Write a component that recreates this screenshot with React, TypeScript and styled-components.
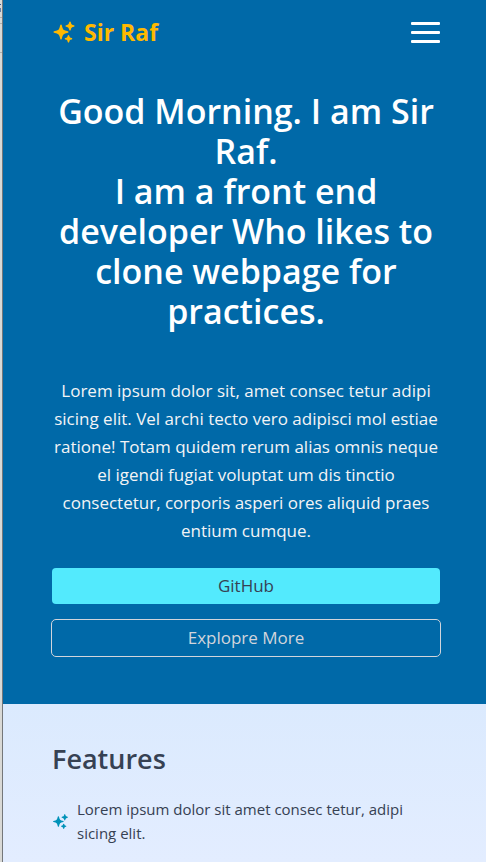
import React from "react";
import styled, { createGlobalStyle } from "styled-components";
import { HiSparkles } from "react-icons/hi2";

const GlobalStyle = createGlobalStyle`
  *, *::before, *::after { box-sizing: border-box; }
  body {
    margin: 0;
    background: #d9d9d6;
    font-family: "Segoe UI", "Open Sans", "Noto Sans", sans-serif;
  }
  h1, h2, p, ul { margin: 0; padding: 0; }
`;

const Frame = styled.div`
  display: grid;
  grid-template-columns: 3px minmax(0, 1fr);
  min-height: 100vh;
`;

const WindowEdge = styled.div`
  border-right: 1px solid #74777a;
  background:
    linear-gradient(#3d5a94, #3d5a94) 0 4px / 1px 1px no-repeat,
    linear-gradient(#6b7ea0, #6b7ea0) 0 8px / 1px 4px no-repeat,
    linear-gradient(#b0b0ae, #b0b0ae) 0 17px / 2px 1px no-repeat,
    linear-gradient(#b0b0ae, #b0b0ae) 0 23px / 2px 1px no-repeat,
    linear-gradient(#b0b0ae, #b0b0ae) 0 52px / 2px 1px no-repeat,
    #d9d9d6;
`;

const Page = styled.div`
  display: flex;
  flex-direction: column;
`;

const Hero = styled.div`
  padding: 0 46px 47px 49px;
  background: #0069a8;
  color: #ffffff;
`;

const TopBar = styled.header`
  display: flex;
  align-items: center;
  justify-content: space-between;
  height: 64px;
`;

const Brand = styled.a`
  display: flex;
  align-items: center;
  gap: 8px;
  color: #ffb900;
  font-size: 23px;
  font-weight: 700;
  line-height: 32px;
  text-decoration: none;
`;

const MenuButton = styled.button`
  display: flex;
  padding: 0;
  border: 0;
  background: none;
  color: inherit;
  cursor: pointer;
`;

const Intro = styled.main`
  display: flex;
  flex-direction: column;
  padding-top: 27px;
  text-align: center;
`;

const Headline = styled.h1`
  font-size: 34px;
  font-weight: 600;
  line-height: 40px;
`;

const Summary = styled.p`
  margin-top: 46px;
  color: #f3f4f6;
  font-size: 17px;
  line-height: 28px;
`;

const Actions = styled.div`
  display: flex;
  flex-direction: column;
  gap: 15px;
  margin-top: 23px;
`;

const ActionButton = styled.button<{ $outlined?: boolean }>`
  height: ${(p) => (p.$outlined ? 38 : 36)}px;
  margin: 0 ${(p) => (p.$outlined ? -1 : 0)}px;
  padding: 0 16px;
  border: ${(p) => (p.$outlined ? "1px solid #d1d5dc" : "0")};
  border-radius: ${(p) => (p.$outlined ? 5 : 4)}px;
  background: ${(p) => (p.$outlined ? "transparent" : "#53eafd")};
  color: ${(p) => (p.$outlined ? "#d1d5dc" : "#364153")};
  font-family: inherit;
  font-size: 17px;
  line-height: 28px;
  cursor: pointer;
`;

const FeatureSection = styled.section`
  flex: 1;
  padding: 37px 46px 16px 49px;
  background: linear-gradient(#dbeafe, #e3edff);
  color: #364153;
`;

const SectionTitle = styled.h2`
  font-size: 27px;
  font-weight: 600;
  line-height: 36px;
`;

const FeatureList = styled.ul`
  margin-top: 20px;
  list-style: none;
`;

const Feature = styled.li`
  display: flex;
  align-items: center;
  gap: 8px;
  font-size: 15px;
  line-height: 24px;

  svg {
    flex: none;
    color: #0092b8;
  }
`;

export default function App() {
  return (
    <>
      <GlobalStyle />
      <Frame>
        <WindowEdge />
        <Page>
          <Hero>
            <TopBar>
              <Brand href="#">
                <HiSparkles size={24} aria-hidden="true" />
                Sir Raf
              </Brand>
              <MenuButton type="button" aria-label="Open menu">
                <svg width="29" height="21" viewBox="0 0 29 21" fill="currentColor" aria-hidden="true">
                  <rect width="29" height="3" rx="1" />
                  <rect y="9" width="29" height="3" rx="1" />
                  <rect y="18" width="29" height="3" rx="1" />
                </svg>
              </MenuButton>
            </TopBar>
            <Intro>
              <Headline>
                Good Morning. I am Sir Raf.
                <br />I am a front end developer Who likes to clone webpage for practices.
              </Headline>
              <Summary>
                Lorem ipsum dolor sit, amet consec tetur adipi sicing elit. Vel archi tecto vero
                adipisci mol estiae ratione! Totam quidem rerum alias omnis neque el igendi fugiat
                voluptat um dis tinctio consectetur, corporis asperi ores aliquid praes entium
                cumque.
              </Summary>
              <Actions>
                <ActionButton type="button">GitHub</ActionButton>
                <ActionButton type="button" $outlined>
                  Explopre More
                </ActionButton>
              </Actions>
            </Intro>
          </Hero>
          <FeatureSection>
            <SectionTitle>Features</SectionTitle>
            <FeatureList>
              <Feature>
                <HiSparkles size={17} aria-hidden="true" />
                <span>Lorem ipsum dolor sit amet consec tetur, adipi sicing elit.</span>
              </Feature>
            </FeatureList>
          </FeatureSection>
        </Page>
      </Frame>
    </>
  );
}
